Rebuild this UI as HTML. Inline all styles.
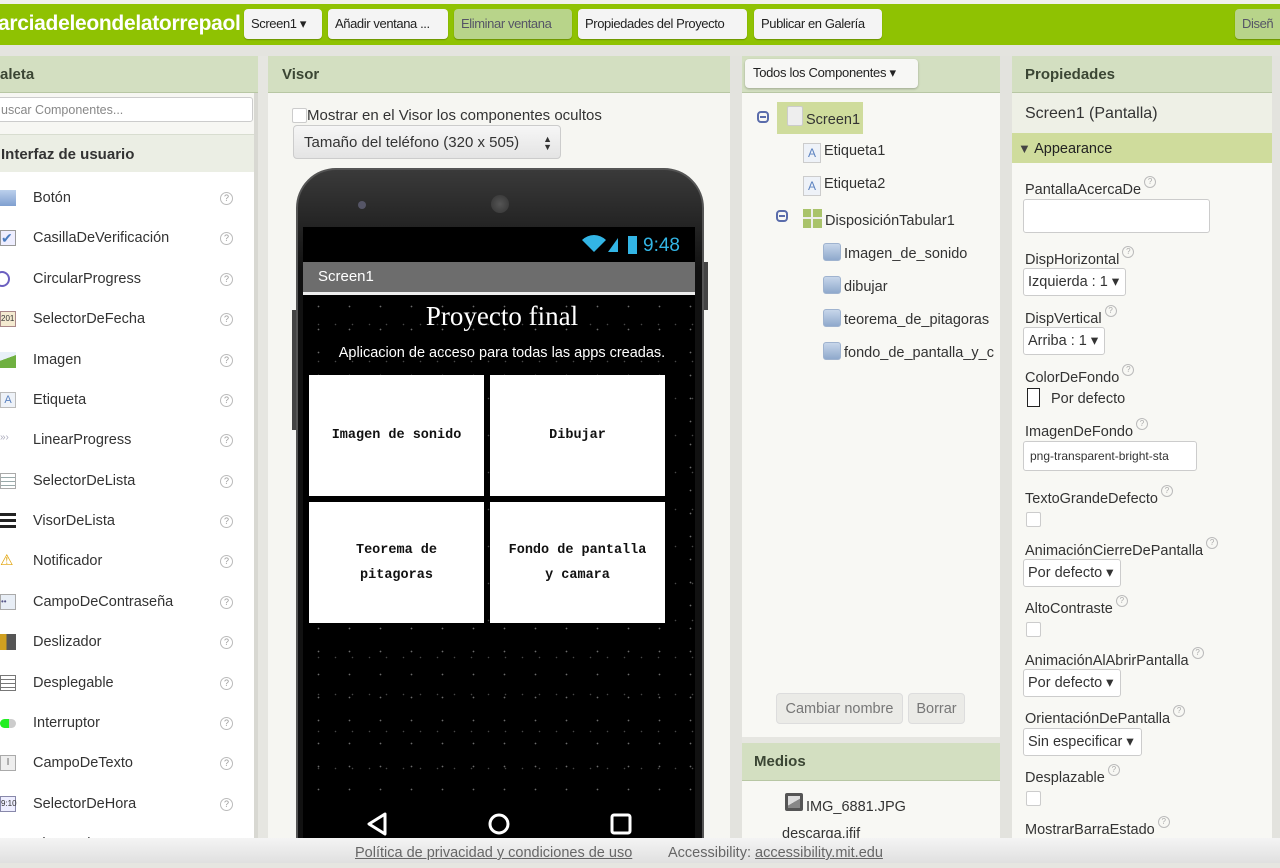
<!DOCTYPE html>
<html><head><meta charset="utf-8"><style>
*{box-sizing:border-box;margin:0;padding:0}
body{width:1280px;height:863px;overflow:hidden;background:#e6e6e1;font-family:"Liberation Sans",sans-serif;color:#333;position:relative}
.a{position:absolute;white-space:nowrap}
.btn{position:absolute;top:9px;height:30px;background:#f4f4f4;border-radius:4px;font-size:13px;letter-spacing:-0.4px;white-space:nowrap;overflow:hidden;line-height:30px;padding:0 7px;color:#222;box-shadow:0 1px 1px rgba(0,0,0,.25)}
.hd{position:absolute;top:56px;height:37px;background:#d3dfc1;border-bottom:1px solid #b8c7a4;font-weight:bold;font-size:15px;line-height:38px;color:#3b4634}
.pi{position:absolute;left:0;width:252px;height:40px;font-size:14.5px;color:#333}
.pi .t{position:absolute;left:33px;top:12px}
.pi .q{position:absolute;left:220px;top:14px;width:13px;height:13px;border:1px solid #bbb;border-radius:50%;font-size:9px;line-height:11px;text-align:center;color:#999}
.ic{position:absolute;left:0;top:12px;width:16px;height:16px}
.pl{position:absolute;left:1025px;font-size:14.5px;color:#333;margin-top:2px}
.pl sup{display:inline-block;width:12px;height:12px;border:1px solid #bbb;border-radius:50%;font-size:8px;line-height:10px;text-align:center;color:#aaa;vertical-align:top;margin-left:3px;margin-top:-6px}
.sel{position:absolute;left:1023px;height:28px;border:1px solid #ccc;border-radius:3px;background:#fff;font-size:14.5px;line-height:26px;padding:0 4px;color:#333;white-space:nowrap}
.cb{position:absolute;left:1026px;width:15px;height:15px;border:1px solid #ccc;border-radius:2px;background:#fff}
.tr{position:absolute;font-size:14.5px;color:#333;white-space:nowrap}
.ti{display:inline-block;width:18px;height:18px;border-radius:3px;background:linear-gradient(#c7d6ea,#8fa9cc);border:1px solid #9fb3cf;vertical-align:-3px;margin-right:3px}
.la{display:inline-block;width:18px;height:20px;border:1px solid #ccc;background:#eef2f8;color:#5b82c0;font-size:12px;text-align:center;line-height:18px;vertical-align:-2px;margin-right:3px}
.cell{position:absolute;background:#fff;font-family:"Liberation Mono",monospace;font-weight:bold;font-size:13.5px;color:#111;display:flex;align-items:center;justify-content:center;text-align:center;line-height:25px}
</style></head><body>
<div class="a" style="left:0;top:0;width:1280px;height:4px;background:#f0f0ec"></div>
<div class="a" style="left:0;top:4px;width:1280px;height:41px;background:#8fc202"></div>
<div class="a" style="left:-2px;top:12px;font-size:21px;font-weight:bold;color:#fff;letter-spacing:-0.3px">arciadeleondelatorrepaol</div>
<div class="btn" style="left:244px;width:78px">Screen1 ▾</div>
<div class="btn" style="left:328px;width:120px">Añadir ventana ...</div>
<div class="btn" style="left:454px;width:118px;background:#b8d48a;color:#556">Eliminar ventana</div>
<div class="btn" style="left:578px;width:169px">Propiedades del Proyecto</div>
<div class="btn" style="left:754px;width:128px">Publicar en Galería</div>
<div class="btn" style="left:1235px;width:60px;background:#b8d48a;color:#556">Diseñ</div>
<div class="a" style="left:0;top:45px;width:1280px;height:11px;background:#e4e4df"></div>

<div class="hd" style="left:0;width:258px">aleta</div>
<div class="a" style="left:0;top:93px;width:258px;height:745px;background:#f7f7f3"></div>
<div class="a" style="left:-4px;top:97px;width:257px;height:25px;background:#fff;border:1px solid #ccc;border-radius:3px;font-size:12.5px;line-height:24px;color:#888;padding-left:4px">uscar Componentes...</div>
<div class="a" style="left:0;top:134px;width:254px;height:38px;background:#ebeee4;border-top:1px solid #d8ddd0;font-weight:bold;font-size:15px;line-height:40px;color:#333;padding-left:1px">Interfaz de usuario</div>
<div class="a" style="left:0;top:172px;width:254px;height:666px;background:#fff">
<div class="pi" style="top:6px"><div class="ic" style="background:linear-gradient(#bcd0ec,#7f9fd0);width:16px"></div><span class="t">Botón</span><span class="q">?</span></div>
<div class="pi" style="top:46px"><div class="ic" style="border:1px solid #999;background:#eef;color:#4a7cc0;font-size:14px;line-height:14px">✔</div><span class="t">CasillaDeVerificación</span><span class="q">?</span></div>
<div class="pi" style="top:87px"><div class="ic" style="border:2px solid #6b5fc0;border-radius:50%;border-left-color:transparent;left:-6px"></div><span class="t">CircularProgress</span><span class="q">?</span></div>
<div class="pi" style="top:127px"><div class="ic" style="border:1px solid #a88;background:#f4ead0;font-size:8px;line-height:14px">201</div><span class="t">SelectorDeFecha</span><span class="q">?</span></div>
<div class="pi" style="top:168px"><div class="ic" style="background:linear-gradient(160deg,#e8f0f8 40%,#6fb040 41%)"></div><span class="t">Imagen</span><span class="q">?</span></div>
<div class="pi" style="top:208px"><div class="ic" style="border:1px solid #bbb;background:#eef2f8;color:#5b82c0;font-size:11px;text-align:center;line-height:14px">A</div><span class="t">Etiqueta</span><span class="q">?</span></div>
<div class="pi" style="top:248px"><div class="ic" style="color:#aab;font-size:10px">»›</div><span class="t">LinearProgress</span><span class="q">?</span></div>
<div class="pi" style="top:289px"><div class="ic" style="border:1px solid #aaa;background:repeating-linear-gradient(#fff 0 3px,#9aa 3px 4px)"></div><span class="t">SelectorDeLista</span><span class="q">?</span></div>
<div class="pi" style="top:329px"><div class="ic" style="background:repeating-linear-gradient(#222 0 3px,#fff 3px 6px)"></div><span class="t">VisorDeLista</span><span class="q">?</span></div>
<div class="pi" style="top:369px"><div class="ic" style="color:#e0a000;font-size:15px;line-height:16px">⚠</div><span class="t">Notificador</span><span class="q">?</span></div>
<div class="pi" style="top:410px"><div class="ic" style="border:1px solid #aaa;background:#e8eef6;font-size:8px;line-height:14px;color:#558">••</div><span class="t">CampoDeContraseña</span><span class="q">?</span></div>
<div class="pi" style="top:450px"><div class="ic" style="background:linear-gradient(90deg,#d0a020 40%,#555 41%)"></div><span class="t">Deslizador</span><span class="q">?</span></div>
<div class="pi" style="top:491px"><div class="ic" style="border:1px solid #777;background:repeating-linear-gradient(#fff 0 3px,#777 3px 4px)"></div><span class="t">Desplegable</span><span class="q">?</span></div>
<div class="pi" style="top:531px"><div class="ic" style="top:16px;height:9px;background:linear-gradient(90deg,#2e2 55%,#ccc 56%);border-radius:5px"></div><span class="t">Interruptor</span><span class="q">?</span></div>
<div class="pi" style="top:571px"><div class="ic" style="border:1px solid #aaa;background:#eee;font-size:10px;line-height:14px;text-align:center;color:#666">I</div><span class="t">CampoDeTexto</span><span class="q">?</span></div>
<div class="pi" style="top:612px"><div class="ic" style="border:1px solid #88a;background:#eef;font-size:8px;line-height:14px">9:10</div><span class="t">SelectorDeHora</span><span class="q">?</span></div>
<div class="pi" style="top:652px"><span class="t">VisorWeb</span></div>
</div>
<div class="a" style="left:254px;top:93px;width:4px;height:745px;background:#d8d8d2"></div>

<div class="hd" style="left:268px;width:462px;padding-left:14px">Visor</div>
<div class="a" style="left:268px;top:93px;width:462px;height:745px;background:#f6f6f2"></div>
<div class="a" style="left:292px;top:108px;width:15px;height:15px;border:1px solid #ccc;border-radius:2px;background:#fff"></div>
<div class="a" style="left:307px;top:107px;font-size:15px;color:#333">Mostrar en el Visor los componentes ocultos</div>
<div class="a" style="left:293px;top:125px;width:268px;height:34px;border:1px solid #ccc;border-radius:4px;background:linear-gradient(#f6f6f6,#e4e4e4);font-size:15px;line-height:33px;padding-left:10px;color:#333">Tamaño del teléfono (320 x 505) <span style="position:absolute;right:8px;font-size:9px;line-height:8px;top:9px">▲<br>▼</span></div>
<div class="a" style="left:296px;top:168px;width:408px;height:680px;background:linear-gradient(#3a3a3a,#111 15%,#111);border-radius:40px 40px 0 0;border:2px solid #555"></div>
<div class="a" style="left:292px;top:310px;width:4px;height:120px;background:#444"></div>
<div class="a" style="left:704px;top:262px;width:4px;height:48px;background:#444"></div>
<div class="a" style="left:358px;top:201px;width:8px;height:8px;border-radius:50%;background:#556"></div>
<div class="a" style="left:491px;top:195px;width:18px;height:18px;border-radius:50%;background:radial-gradient(#555,#333)"></div>
<div class="a" style="left:303px;top:227px;width:392px;height:611px;background:#000"></div>
<div class="a" style="left:303px;top:295px;width:392px;height:500px;background-color:#000;background-image:radial-gradient(circle,#999 0.6px,transparent 1.1px),radial-gradient(circle,#666 0.5px,transparent 1px);background-size:31px 23px,17px 37px;background-position:0 0,7px 11px;opacity:.7"></div>
<div class="a" style="left:580px;top:233px;font-size:19px;color:#33b5e5">
<svg width="42" height="20" viewBox="0 0 42 20" style="vertical-align:-2px"><path d="M2 7a17 17 0 0 1 24 0L14 19z" fill="#33b5e5"/><path d="M28 19L38 5V19z" fill="#33b5e5"/></svg><span style="display:inline-block;width:9px;height:18px;background:#33b5e5;margin:0 6px;vertical-align:-3px"></span>9:48</div>
<div class="a" style="left:303px;top:262px;width:392px;height:30px;background:#6d6d6d;color:#fff;font-size:15px;line-height:29px;padding-left:15px">Screen1</div>
<div class="a" style="left:303px;top:292px;width:392px;height:3px;background:#eee"></div>
<div class="a" style="left:303px;top:301px;width:398px;text-align:center;font-family:'Liberation Serif',serif;font-size:27px;color:#fff">Proyecto final</div>
<div class="a" style="left:303px;top:345px;width:398px;text-align:center;font-size:14.5px;color:#fff">Aplicacion de acceso para todas las apps creadas.</div>
<div class="cell" style="left:309px;top:375px;width:175px;height:121px">Imagen de sonido</div>
<div class="cell" style="left:490px;top:375px;width:175px;height:121px">Dibujar</div>
<div class="cell" style="left:309px;top:502px;width:175px;height:121px">Teorema de<br>pitagoras</div>
<div class="cell" style="left:490px;top:502px;width:175px;height:121px">Fondo de pantalla<br>y camara</div>
<svg class="a" style="left:360px;top:811px" width="280" height="26"><path d="M25 3L9 13L25 23z" fill="none" stroke="#fff" stroke-width="3" stroke-linejoin="round"/><circle cx="139" cy="13" r="9" fill="none" stroke="#fff" stroke-width="3"/><rect x="252" y="4" width="18" height="18" rx="2" fill="none" stroke="#fff" stroke-width="3"/></svg>
<div class="a" style="left:730px;top:56px;width:12px;height:782px;background:#e3e3de"></div>

<div class="hd" style="left:742px;width:258px"></div>
<div class="a" style="left:745px;top:59px;width:173px;height:29px;background:#f7f7f5;border-radius:4px;box-shadow:0 1px 2px rgba(0,0,0,.25);font-size:13px;letter-spacing:-0.3px;line-height:28px;padding-left:8px;color:#222;white-space:nowrap">Todos los Componentes ▾</div>
<div class="a" style="left:742px;top:93px;width:258px;height:644px;background:#f8f8f4"></div>
<div class="a" style="left:757px;top:111px;width:12px;height:12px;border:2px solid #5a6cab;border-radius:4px"><div style="margin:3px 1px;height:2px;background:#5a6cab"></div></div>
<div class="a" style="left:777px;top:102px;width:86px;height:32px;background:#cfdc9c"></div>
<div class="a" style="left:787px;top:106px;width:16px;height:20px;border:1px solid #ccc;background:#eee;border-radius:2px"></div>
<div class="tr" style="left:806px;top:112px">Screen1</div>
<div class="tr" style="left:803px;top:143px"><span class="la">A</span>Etiqueta1</div>
<div class="tr" style="left:803px;top:176px"><span class="la">A</span>Etiqueta2</div>
<div class="a" style="left:776px;top:210px;width:12px;height:12px;border:2px solid #5a6cab;border-radius:4px"><div style="margin:3px 1px;height:2px;background:#5a6cab"></div></div>
<div class="tr" style="left:803px;top:209px"><span style="display:inline-block;width:19px;height:19px;background:#a9c36a;vertical-align:-3px;margin-right:3px;background-image:linear-gradient(90deg,transparent 8px,#eee 8px 10px,transparent 10px),linear-gradient(transparent 8px,#eee 8px 10px,transparent 10px)"></span>DisposiciónTabular1</div>
<div class="tr" style="left:823px;top:243px"><span class="ti"></span>Imagen_de_sonido</div>
<div class="tr" style="left:823px;top:276px"><span class="ti"></span>dibujar</div>
<div class="tr" style="left:823px;top:309px"><span class="ti"></span>teorema_de_pitagoras</div>
<div class="tr" style="left:823px;top:342px"><span class="ti"></span>fondo_de_pantalla_y_c</div>
<div class="a" style="left:776px;top:693px;width:127px;height:31px;background:#ebebe7;border:1px solid #ddd;border-radius:4px;font-size:14.5px;line-height:30px;text-align:center;color:#777">Cambiar nombre</div>
<div class="a" style="left:908px;top:693px;width:57px;height:31px;background:#ebebe7;border:1px solid #ddd;border-radius:4px;font-size:14.5px;line-height:30px;text-align:center;color:#777">Borrar</div>
<div class="hd" style="left:742px;top:743px;width:258px;height:38px;padding-left:12px;line-height:38px">Medios</div>
<div class="a" style="left:742px;top:781px;width:258px;height:57px;background:#f8f8f4"></div>
<div class="a" style="left:785px;top:793px;width:18px;height:18px;background:#555;border-radius:2px"><div style="margin:3px;height:12px;background:linear-gradient(150deg,#ddd 50%,#888 51%)"></div></div>
<div class="tr" style="left:806px;top:799px">IMG_6881.JPG</div>
<div class="tr" style="left:782px;top:826px">descarga.jfif</div>
<div class="a" style="left:1000px;top:56px;width:12px;height:782px;background:#e3e3de"></div>

<div class="hd" style="left:1012px;width:260px;padding-left:13px">Propiedades</div>
<div class="a" style="left:1012px;top:93px;width:260px;height:40px;background:#eef0e6;font-size:16px;line-height:41px;padding-left:13px;color:#333">Screen1 (Pantalla)</div>
<div class="a" style="left:1012px;top:133px;width:260px;height:30px;background:#cfdc9c;font-size:14.5px;line-height:31px;padding-left:6px;color:#222"><span style="font-size:13px;color:#444">▼</span> Appearance</div>
<div class="a" style="left:1012px;top:163px;width:260px;height:675px;background:#f8f8f4"></div>
<div class="a" style="left:1272px;top:56px;width:8px;height:782px;background:#e3e3de"></div>
<div class="pl" style="top:180px">PantallaAcercaDe<sup>?</sup></div>
<div class="a" style="left:1023px;top:199px;width:187px;height:34px;background:#fff;border:1px solid #ccc;border-radius:3px"></div>
<div class="pl" style="top:250px">DispHorizontal<sup>?</sup></div>
<div class="sel" style="top:268px;width:103px">Izquierda : 1 ▾</div>
<div class="pl" style="top:309px">DispVertical<sup>?</sup></div>
<div class="sel" style="top:327px;width:82px">Arriba : 1 ▾</div>
<div class="pl" style="top:368px">ColorDeFondo<sup>?</sup></div>
<div class="a" style="left:1027px;top:388px;width:13px;height:19px;border:1px solid #222;background:#fff"></div>
<div class="pl" style="top:389px;left:1051px">Por defecto</div>
<div class="pl" style="top:422px">ImagenDeFondo<sup>?</sup></div>
<div class="a" style="left:1023px;top:441px;width:174px;height:30px;background:#fff;border:1px solid #ccc;border-radius:3px;font-size:12px;line-height:29px;padding-left:6px;overflow:hidden;color:#333">png-transparent-bright-sta</div>
<div class="pl" style="top:489px">TextoGrandeDefecto<sup>?</sup></div>
<div class="cb" style="top:512px"></div>
<div class="pl" style="top:541px">AnimaciónCierreDePantalla<sup>?</sup></div>
<div class="sel" style="top:559px;width:98px">Por defecto ▾</div>
<div class="pl" style="top:599px">AltoContraste<sup>?</sup></div>
<div class="cb" style="top:622px"></div>
<div class="pl" style="top:651px">AnimaciónAlAbrirPantalla<sup>?</sup></div>
<div class="sel" style="top:669px;width:98px">Por defecto ▾</div>
<div class="pl" style="top:709px">OrientaciónDePantalla<sup>?</sup></div>
<div class="sel" style="top:728px;width:119px">Sin especificar ▾</div>
<div class="pl" style="top:768px">Desplazable<sup>?</sup></div>
<div class="cb" style="top:791px"></div>
<div class="pl" style="top:820px">MostrarBarraEstado<sup>?</sup></div>

<div class="a" style="left:0;top:838px;width:1280px;height:25px;background:linear-gradient(#f4f4f4,#e0e0e0);font-size:14.5px;line-height:30px;color:#666">
<span class="a" style="left:355px;text-decoration:underline">Política de privacidad y condiciones de uso</span>
<span class="a" style="left:668px">Accessibility: <span style="text-decoration:underline">accessibility.mit.edu</span></span>
</div>
</body></html>
